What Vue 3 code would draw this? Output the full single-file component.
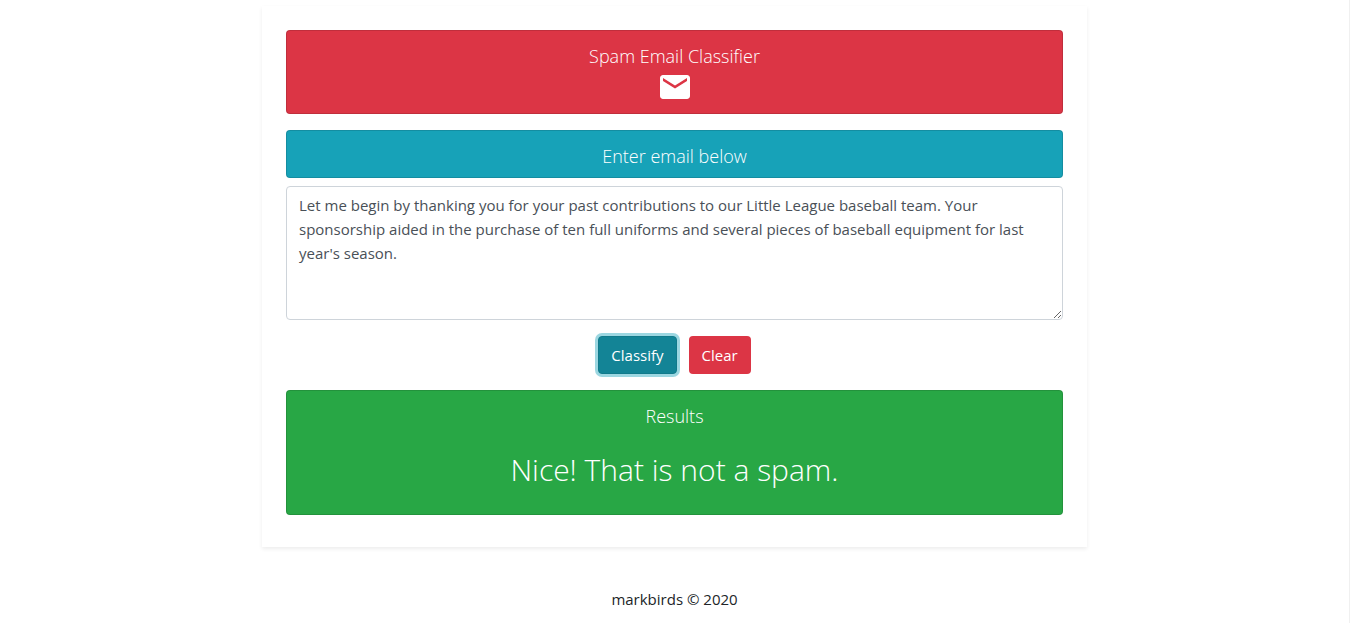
<script setup>
import { ref } from 'vue'

const email = ref("Let me begin by thanking you for your past contributions to our Little League baseball team. Your sponsorship aided in the purchase of ten full uniforms and several pieces of baseball equipment for last year's season.")
const result = ref('Nice! That is not a spam.')

function clear() {
  email.value = ''
}
</script>

<template>
  <div class="page">
    <main class="panel">
      <header class="banner title">
        <h1>Spam Email Classifier</h1>
        <svg class="mail" viewBox="2 4 20 16" aria-hidden="true">
          <path fill="currentColor" d="M20 4H4c-1.100 0-1.990.9-1.990 2L2 18c0 1.100.9 2 2 2h16c1.100 0 2-.9 2-2V6c0-1.100-.9-2-2-2zm0 4l-8 5-8-5V6l8 5 8-5v2z" />
        </svg>
      </header>
      <form @submit.prevent>
        <label class="banner prompt" for="email">Enter email below</label>
        <textarea id="email" v-model="email" rows="5" spellcheck="false"></textarea>
        <div class="actions">
          <button class="btn classify" type="submit">Classify</button>
          <button class="btn clear" type="button" @click="clear">Clear</button>
        </div>
      </form>
      <section class="banner results">
        <h2>Results</h2>
        <p>{{ result }}</p>
      </section>
    </main>
    <footer>markbirds © 2020</footer>
  </div>
</template>

<style>
body {
  background: #fff;
}
</style>

<style scoped>
.page,
.page * {
  box-sizing: border-box;
}

.page {
  display: flow-root;
  min-height: 100vh;
  padding: 0 16px;
  border-right: 1px solid #f0f0f0;
  font-family: "Open Sans", "Noto Sans", sans-serif;
  font-weight: 400;
  font-size: 15px;
  line-height: 24px;
  color: #212529;
}

.panel {
  max-width: 825px;
  margin: 6px auto 0;
  padding: 24px 24px 32px;
  box-shadow: 0 2px 4px rgba(0, 0, 0, 0.075);
}

.banner {
  border: 1px solid rgba(0, 0, 0, 0.125);
  border-radius: 4px;
  color: #fff;
  text-align: center;
}

.title {
  padding: 13px 12px;
  margin-bottom: 16px;
  background: #dc3545;
}

h1,
h2,
.prompt {
  margin: 0;
  font-size: 18px;
  font-weight: 300;
  line-height: 24px;
}

.mail {
  display: block;
  width: 30px;
  height: 24px;
  margin: 7px auto 1px;
}

.prompt {
  display: block;
  padding: 13px 12px 9px;
  margin-bottom: 8px;
  background: #17a2b8;
}

textarea {
  display: block;
  width: 100%;
  height: 134px;
  padding: 6px 12px;
  border: 1px solid #ced4da;
  border-radius: 4px;
  outline: 0;
  background: #fff;
  color: #495057;
  font: inherit;
  resize: vertical;
}

.actions {
  display: flex;
  justify-content: center;
  gap: 12px;
  margin: 16px 0;
}

.btn {
  padding: 6px 12px;
  border: 1px solid transparent;
  border-radius: 4px;
  color: #fff;
  font: inherit;
}

.classify {
  border-color: #117a8b;
  background: #138496;
  box-shadow: 0 0 0 3px rgba(58, 176, 195, 0.5);
}

.clear {
  background: #dc3545;
}

.results {
  padding: 13px 12px 20px;
  background: #28a745;
}

.results p {
  margin: 18px 0 0;
  font-size: 30px;
  font-weight: 300;
  line-height: 48px;
}

footer {
  margin-top: 40px;
  text-align: center;
}
</style>
